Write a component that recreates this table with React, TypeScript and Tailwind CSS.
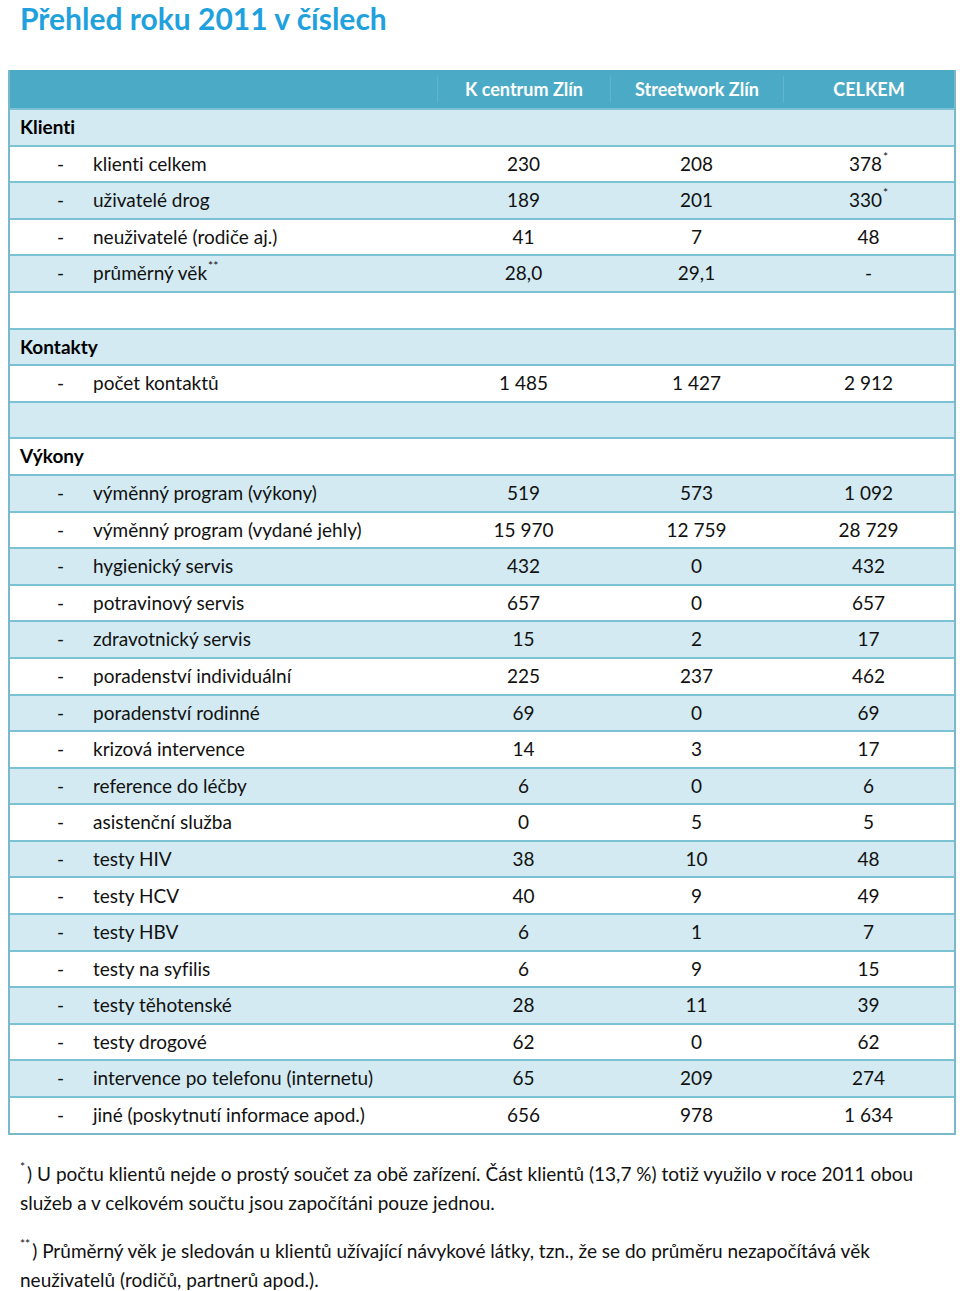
const FONT = "font-['Lato','Noto_Sans',sans-serif] [font-variant-ligatures:none]";

type Row =
  | { kind: "section"; label: string }
  | { kind: "blank" }
  | { kind: "item"; label: string; sup?: string; a: string; b: string; c: string; cSup?: string };

const ROWS: Row[] = [
  { kind: "section", label: "Klienti" },
  { kind: "item", label: "klienti celkem", a: "230", b: "208", c: "378", cSup: "*" },
  { kind: "item", label: "uživatelé drog", a: "189", b: "201", c: "330", cSup: "*" },
  { kind: "item", label: "neuživatelé (rodiče aj.)", a: "41", b: "7", c: "48" },
  { kind: "item", label: "průměrný věk", sup: "**", a: "28,0", b: "29,1", c: "-" },
  { kind: "blank" },
  { kind: "section", label: "Kontakty" },
  { kind: "item", label: "počet kontaktů", a: "1 485", b: "1 427", c: "2 912" },
  { kind: "blank" },
  { kind: "section", label: "Výkony" },
  { kind: "item", label: "výměnný program (výkony)", a: "519", b: "573", c: "1 092" },
  { kind: "item", label: "výměnný program (vydané jehly)", a: "15 970", b: "12 759", c: "28 729" },
  { kind: "item", label: "hygienický servis", a: "432", b: "0", c: "432" },
  { kind: "item", label: "potravinový servis", a: "657", b: "0", c: "657" },
  { kind: "item", label: "zdravotnický servis", a: "15", b: "2", c: "17" },
  { kind: "item", label: "poradenství individuální", a: "225", b: "237", c: "462" },
  { kind: "item", label: "poradenství rodinné", a: "69", b: "0", c: "69" },
  { kind: "item", label: "krizová intervence", a: "14", b: "3", c: "17" },
  { kind: "item", label: "reference do léčby", a: "6", b: "0", c: "6" },
  { kind: "item", label: "asistenční služba", a: "0", b: "5", c: "5" },
  { kind: "item", label: "testy HIV", a: "38", b: "10", c: "48" },
  { kind: "item", label: "testy HCV", a: "40", b: "9", c: "49" },
  { kind: "item", label: "testy HBV", a: "6", b: "1", c: "7" },
  { kind: "item", label: "testy na syfilis", a: "6", b: "9", c: "15" },
  { kind: "item", label: "testy těhotenské", a: "28", b: "11", c: "39" },
  { kind: "item", label: "testy drogové", a: "62", b: "0", c: "62" },
  { kind: "item", label: "intervence po telefonu (internetu)", a: "65", b: "209", c: "274" },
  { kind: "item", label: "jiné (poskytnutí informace apod.)", a: "656", b: "978", c: "1 634" },
];

const GRID = "grid grid-cols-[427px_173px_173px_1fr]";

function Mark({ text }: { text: string }) {
  return <span className="inline-block align-top pl-[1px] text-[12px] leading-[14px]">{text}</span>;
}

function DataRow({ row, index }: { row: Row; index: number }) {
  const bg = index % 2 === 0 ? "bg-[#d3eaf2]" : "bg-white";
  const base = `${GRID} h-[36.6px] items-center border-t-2 border-[#7cc2d5] ${bg}`;
  if (row.kind === "blank") return <div className={base} />;
  if (row.kind === "section")
    return (
      <div className={base}>
        <div className="pl-[10px] text-[19px] font-bold text-black">{row.label}</div>
      </div>
    );
  return (
    <div className={`${base} text-[19px] text-[#111]`}>
      <div className="flex items-center">
        <span className="w-[83px] pl-[47px]">-</span>
        <span>
          {row.label}
          {row.sup && <Mark text={row.sup} />}
        </span>
      </div>
      <div className="text-center">{row.a}</div>
      <div className="text-center">{row.b}</div>
      <div className="text-center">
        {row.c}
        {row.cSup && <Mark text={row.cSup} />}
      </div>
    </div>
  );
}

export default function App() {
  return (
    <div className={`${FONT} h-[1291px] w-[960px] bg-white`}>
      <h1 className="pl-[20px] text-[30px] font-bold leading-[36px] text-[#1fa1dd]">
        Přehled roku 2011 v číslech
      </h1>

      <div className="ml-[8px] mt-[34px] w-[948px] border-x-2 border-b-2 border-[#7ab9ca]">
        <div className={`${GRID} h-[38px] items-center bg-[#4babc6] text-[18px] font-bold text-white`}>
          <div />
          <div className="border-l border-[#5fb5cc] text-center">K centrum Zlín</div>
          <div className="border-l border-[#5fb5cc] text-center">Streetwork Zlín</div>
          <div className="border-l border-[#5fb5cc] text-center">CELKEM</div>
        </div>
        {ROWS.map((row, i) => (
          <DataRow key={i} row={row} index={i} />
        ))}
      </div>

      <div className="px-[20px] pt-[24px] text-[19px] leading-[29px] text-[#111]">
        <p>
          <span className="inline-block align-top pr-[2px] text-[12px] leading-[16px]">*</span>) U počtu
          klientů nejde o prostý součet za obě zařízení. Část klientů (13,7 %) totiž využilo v roce 2011 obou
          služeb a v celkovém součtu jsou započítáni pouze jednou.
        </p>
        <p className="mt-[19px]">
          <span className="inline-block align-top pr-[2px] text-[12px] leading-[16px]">**</span>) Průměrný
          věk je sledován u klientů užívající návykové látky, tzn., že se do průměru nezapočítává věk
          neuživatelů (rodičů, partnerů apod.).
        </p>
      </div>
    </div>
  );
}
